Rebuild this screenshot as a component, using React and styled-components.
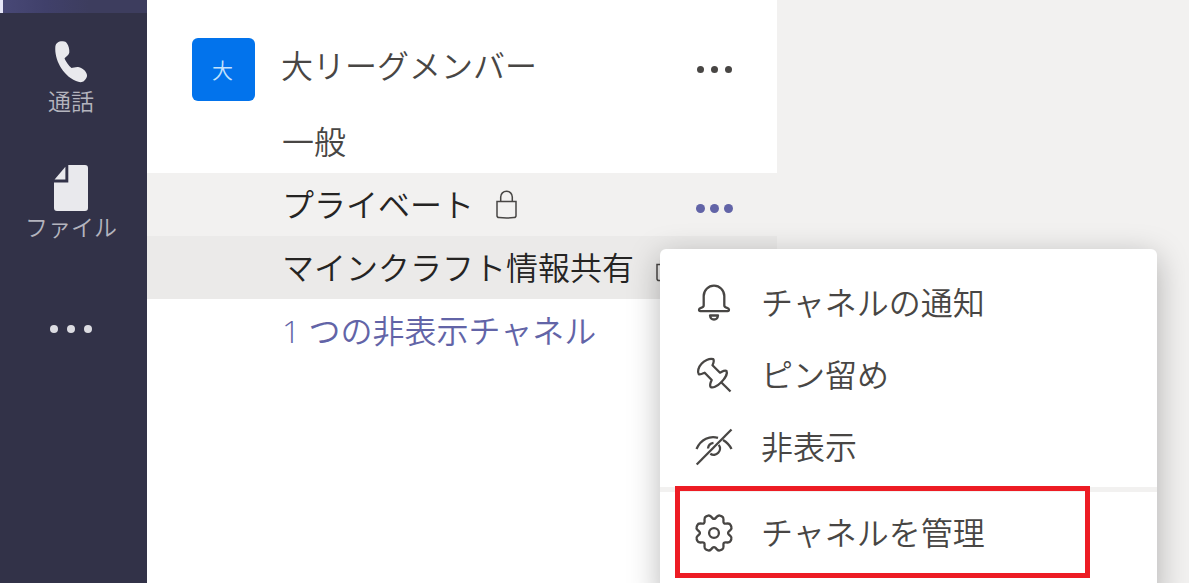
import React from "react";
import styled, { createGlobalStyle } from "styled-components";

const App = () => {
  return (
    <Layout>
      <GlobalStyle />
      <Rail>
        <TitleStrip />
        <RailList>
          <RailButton type="button">
            <svg width="46" height="46" viewBox="0 0 46 46" aria-hidden="true">
              <path d="M15 2.3C11 2 7.5 4 7.3 8C6.5 20 14 36 28 42C31 43.5 34.5 43.5 36 42C38 40 39.3 38 39 36C38.5 31.5 33 28.5 30 28C27.5 27.8 25 29 23.5 29C20.5 26.5 18 22.5 16.5 19.5C18 17.5 21 16 21.3 13.5C21.6 10 20.5 6.5 19 4.5C18.2 3 16.8 2.5 15 2.3z" />
            </svg>
            <span>通話</span>
          </RailButton>
          <RailButton type="button">
            <svg width="34" height="46" viewBox="0 0 34 46" aria-hidden="true">
              <path d="M14.3 0H31a3 3 0 0 1 3 3v40a3 3 0 0 1-3 3H3a3 3 0 0 1-3-3V17.4h14.3z" />
              <path d="M11.4 1.8V14.4H.6z" />
            </svg>
            <span>ファイル</span>
          </RailButton>
          <MoreButton type="button" aria-label="その他">
            <Dots size={8} step={17} />
          </MoreButton>
        </RailList>
      </Rail>

      <Sidebar>
        <TeamRow>
          <Avatar>大</Avatar>
          <TeamName>大リーグメンバー</TeamName>
          <IconButton type="button" aria-label="チームのオプション">
            <Dots size={7} step={14} />
          </IconButton>
        </TeamRow>
        <ChannelRow>
          <ChannelLink href="#general">一般</ChannelLink>
        </ChannelRow>
        <ChannelRow $state="hover">
          <ChannelLink href="#private" $strong>
            プライベート
          </ChannelLink>
          <LockIcon />
          <IconButton type="button" aria-label="チャネルのオプション" $active>
            <Dots size={9} step={14} />
          </IconButton>
          <Menu role="menu">
            <MenuItem type="button" role="menuitem">
              <BellIcon />
              チャネルの通知
            </MenuItem>
            <MenuItem type="button" role="menuitem">
              <PinIcon />
              ピン留め
            </MenuItem>
            <MenuItem type="button" role="menuitem">
              <HideIcon />
              非表示
            </MenuItem>
            <Divider />
            <MenuItem type="button" role="menuitem" $marked>
              <GearIcon />
              チャネルを管理
            </MenuItem>
          </Menu>
        </ChannelRow>
        <ChannelRow $state="selected">
          <ChannelLink href="#minecraft" $strong>
            マインクラフト情報共有
          </ChannelLink>
          <LockIcon />
        </ChannelRow>
        <ChannelRow>
          <ChannelLink href="#hidden" $accent>
            1 つの非表示チャネル
          </ChannelLink>
        </ChannelRow>
      </Sidebar>
      <Content />
    </Layout>
  );
};

const Dots = ({ size, step }) => {
  const r = size / 2;
  const width = step * 2 + size;
  return (
    <svg
      width={width}
      height={size}
      viewBox={`0 0 ${width} ${size}`}
      aria-hidden="true"
    >
      {[0, 1, 2].map((i) => (
        <circle key={i} cx={r + i * step} cy={r} r={r} />
      ))}
    </svg>
  );
};

const LockIcon = () => (
  <Lock width="24" height="30" viewBox="0 0 24 30" aria-hidden="true">
    <path d="M2 11.5h19v14.2c0 1.2-.8 1.8-2 1.9-5 .5-10 .5-15 0-1.2-.1-2-.7-2-1.9z" />
    <path d="M5.7 11.3V7a5.8 5.8 0 0 1 11.6 0v4.3" />
  </Lock>
);

const MenuIcon = ({ children }) => (
  <svg width="40" height="40" viewBox="0 0 40 40" aria-hidden="true">
    {children}
  </svg>
);

const BellIcon = () => (
  <MenuIcon>
    <path d="M9.7 13a10.3 10.3 0 0 1 20.6 0v9.5c0 1.2 1.2 2 3.3 2.6 1.7.5 1.9 3 .1 3H6.3c-1.8 0-1.6-2.5.1-3 2.1-.6 3.3-1.4 3.3-2.6z" />
    <path d="M16 32.5h8c-.3 2.8-2 4-4 4s-3.7-1.2-4-4z" />
  </MenuIcon>
);

const PinIcon = () => (
  <MenuIcon>
    <path d="M19.3 4.2C15 3 10 6 7.5 8.8C4.5 12 3 17 4.8 19.3C6.5 20 9 18.5 10.7 17.7L17.7 25C16.5 27.5 15.5 30 16.5 31.8C18.5 33.5 23 31.5 27 27.5C31 23.5 33.8 18.5 32.5 16C31 14.8 28.5 16.5 26 17.7L18.5 10.3C19.5 8 20.5 5.8 19.3 4.2z" />
    <path d="M26.7 26.7L36.5 36.5" />
  </MenuIcon>
);

const HideIcon = () => (
  <MenuIcon>
    <path d="M2.7 37.5L37.5 2.5" />
    <path d="M2.5 22C7 12 16 8.5 24 10.9M29 13c3.5 2 6.500 5 8.5 9" />
    <path d="M14 21.5a6.3 6.3 0 0 1 5.5-5.6M24.8 17.8a6.3 6.3 0 0 1-8.5 9" />
  </MenuIcon>
);

// eight teeth, every corner rounded by a quadratic curve
const gearPath = () => {
  const points = [];
  for (let k = 0; k < 8; k++) {
    [
      [0, 13.2],
      [14, 18.6],
      [31, 18.6],
    ].forEach(([offset, radius]) => {
      const angle = ((k * 45 + offset) * Math.PI) / 180;
      points.push([20 + radius * Math.sin(angle), 20 - radius * Math.cos(angle)]);
    });
  }
  const between = (a, b, t) =>
    [a[0] + (b[0] - a[0]) * t, a[1] + (b[1] - a[1]) * t]
      .map((n) => n.toFixed(2))
      .join(" ");
  const parts = points.map((p, i) => {
    const prev = points[(i + points.length - 1) % points.length];
    const next = points[(i + 1) % points.length];
    return `${i ? "L" : "M"}${between(p, prev, 0.35)}Q${between(p, p, 0)} ${between(p, next, 0.35)}`;
  });
  return `${parts.join("")}z`;
};

const GearIcon = () => (
  <MenuIcon>
    <path d={gearPath()} />
    <circle cx="20" cy="20" r="4.9" />
  </MenuIcon>
);

const GlobalStyle = createGlobalStyle`
  * {
    box-sizing: border-box;
  }
  body {
    margin: 0;
    background: #f2f1f0;
    font-family: "Open Sans", "Noto Sans CJK JP", sans-serif;
    font-weight: 350;
  }
  button {
    margin: 0;
    padding: 0;
    border: 0;
    background: none;
    color: inherit;
    font: inherit;
    cursor: pointer;
  }
  svg {
    flex: none;
    display: block;
  }
`;

const Layout = styled.div`
  height: 100vh;
  display: grid;
  grid-template-columns: 147px 630px 1fr;
  overflow: hidden;
`;

const Rail = styled.nav`
  background: #323248;
`;

const TitleStrip = styled.div`
  height: 13px;
  border-left: 3px solid #e6e6f8;
  background: linear-gradient(90deg, #484876, #40406a 30%, #3d3d5e 60%);
`;

const RailList = styled.div`
  display: flex;
  flex-direction: column;
  align-items: center;
  gap: 51px;
  padding: 26px 5px 0 0;
`;

const RailButton = styled.button`
  height: 75px;
  display: flex;
  flex-direction: column;
  align-items: center;
  gap: 4px;
  color: #b4b4be;
  font-size: 23px;
  line-height: 24px;
  svg {
    fill: #e9e9ed;
  }
`;

const MoreButton = styled.button`
  height: 76px;
  display: grid;
  place-items: center;
  svg {
    fill: #dcdce2;
  }
`;

const Sidebar = styled.aside`
  background: #fff;
  color: #484644;
  font-size: 32px;
  line-height: 48px;
`;

const TeamRow = styled.div`
  display: flex;
  align-items: center;
  padding: 38px 45px 9px;
`;

const Avatar = styled.span`
  width: 63px;
  height: 63px;
  display: grid;
  place-items: center;
  padding-right: 2px;
  border-radius: 6px;
  background: #0273ec;
  color: #c4e2fc;
  font-size: 21px;
`;

const TeamName = styled.span`
  padding: 0 0 8px 26px;
`;

const ChannelRow = styled.div`
  position: relative;
  height: 63px;
  display: flex;
  align-items: center;
  gap: 21px;
  padding: 0 44px 0 135px;
  background: ${({ $state }) =>
    $state === "hover"
      ? "#f2f1f0"
      : $state === "selected"
        ? "#ebeae9"
        : "transparent"};
`;

const ChannelLink = styled.a`
  color: ${({ $accent, $strong }) =>
    $accent ? "#6264a7" : $strong ? "#252423" : "#484644"};
  text-decoration: none;
  white-space: nowrap;
`;

const Lock = styled.svg`
  fill: none;
  stroke: #484644;
  stroke-width: 1.5;
`;

const IconButton = styled.button`
  margin-left: auto;
  padding-top: ${({ $active }) => ($active ? "8px" : "0")};
  svg {
    fill: ${({ $active }) => ($active ? "#6264a7" : "#484644")};
  }
`;

const Menu = styled.div`
  position: absolute;
  top: 76px;
  left: 513px;
  z-index: 1;
  width: 497px;
  padding: 18px 0 32px;
  border-radius: 6px;
  background: #fff;
  box-shadow: 0 8px 32px rgba(0, 0, 0, 0.28);
`;

const MenuItem = styled.button`
  position: relative;
  width: 100%;
  height: 72px;
  display: flex;
  align-items: center;
  gap: 27px;
  padding-left: 34px;
  svg {
    fill: none;
    stroke: #484644;
    stroke-width: 2.3;
    stroke-linejoin: round;
  }
  &::after {
    content: "";
    display: ${({ $marked }) => ($marked ? "block" : "none")};
    position: absolute;
    inset: -11px 67px -9px 15px;
    border: 5px solid #ed1c24;
  }
`;

const Divider = styled.hr`
  height: 5px;
  margin: 4px 0 5px;
  border: 0;
  background: #f2f1f0;
`;

const Content = styled.main`
  background: #f2f1f0;
`;

export default App;
